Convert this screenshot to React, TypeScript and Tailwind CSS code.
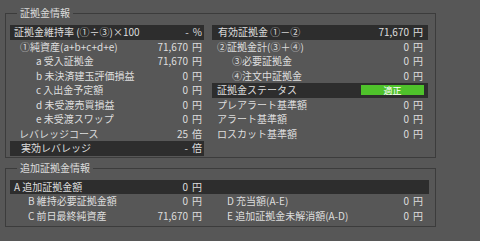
import React from "react";

type Row = { label: string; value?: string; pl: string; dark?: boolean; status?: boolean };

const left: Row[] = [
  { label: "証拠金維持率 (①÷③)×100", value: "- %", pl: "pl-[4px]", dark: true },
  { label: "①純資産(a+b+c+d+e)", value: "71,670 円", pl: "pl-[10px]" },
  { label: "a 受入証拠金", value: "71,670 円", pl: "pl-[26px]" },
  { label: "b 未決済建玉評価損益", value: "0 円", pl: "pl-[26px]" },
  { label: "c 入出金予定額", value: "0 円", pl: "pl-[26px]" },
  { label: "d 未受渡売買損益", value: "0 円", pl: "pl-[26px]" },
  { label: "e 未受渡スワップ", value: "0 円", pl: "pl-[26px]" },
  { label: "レバレッジコース", value: "25 倍", pl: "pl-[9px]" },
  { label: "実効レバレッジ", value: "- 倍", pl: "pl-[11px]", dark: true },
];

const right: Row[] = [
  { label: "有効証拠金 ①－②", value: "71,670 円", pl: "pl-[6px]", dark: true },
  { label: "②証拠金計(③＋④)", value: "0 円", pl: "pl-[5px]" },
  { label: "③必要証拠金", value: "0 円", pl: "pl-[20px]" },
  { label: "④注文中証拠金", value: "0 円", pl: "pl-[20px]" },
  { label: "証拠金ステータス", pl: "pl-[5px]", dark: true, status: true },
  { label: "プレアラート基準額", value: "0 円", pl: "pl-[5px]" },
  { label: "アラート基準額", value: "0 円", pl: "pl-[5px]" },
  { label: "ロスカット基準額", value: "0 円", pl: "pl-[5px]" },
];

function Val({ v }: { v?: string }) {
  if (!v) return null;
  const [n, u] = v.split(" ");
  return (
    <span className="whitespace-nowrap flex items-center">
      <span>{n}</span>
      <span className="ml-[4px]">{u}</span>
    </span>
  );
}

function RowView({ r, vr }: { r: Row; vr: string }) {
  return (
    <div
      className={`h-[14.5px] flex items-center justify-between ${r.pl} ${vr} ${
        r.dark ? "bg-[#2d2d2d]" : ""
      }`}
    >
      <span className="whitespace-nowrap">{r.label}</span>
      {r.status ? (
        <span className="w-[63px] h-[10px] bg-[#4fc22b] text-white flex items-center justify-center text-[9px] leading-none">
          適正
        </span>
      ) : (
        <Val v={r.value} />
      )}
    </div>
  );
}

function Frame({
  title,
  children,
  className,
}: {
  title: string;
  children: React.ReactNode;
  className: string;
}) {
  return (
    <div className={`relative border border-[#3c3c3c] ${className}`}>
      <span className="absolute left-[11px] -top-[7px] px-[3px] bg-[#575757] leading-[12px] text-[#dcdcdc]">
        {title}
      </span>
      {children}
    </div>
  );
}

export default function App() {
  return (
    <div
      className="w-[480px] h-[241px] bg-[#575757] pt-[13px] px-[5px] text-[10px] leading-[12px] text-[#dedede] overflow-hidden"
      style={{ fontFamily: '"Noto Sans CJK JP", "Noto Sans", sans-serif' }}
    >
      <Frame title="証拠金情報" className="w-[431px] h-[145px] pt-[11px] pl-[4px] pr-[6px]">
        <div className="flex gap-[8px]">
          <div className="w-[194px] flex flex-col">
            {left.map((r, i) => (
              <RowView key={i} r={r} vr="pr-[2px]" />
            ))}
          </div>
          <div className="w-[216px] flex flex-col">
            {right.map((r, i) => (
              <RowView key={i} r={r} vr={r.status ? "pr-[4px]" : "pr-[5px]"} />
            ))}
          </div>
        </div>
      </Frame>
      <Frame title="追加証拠金情報" className="mt-[10px] w-[431px] h-[59px] pt-[11px] pl-[4px] pr-[6px]">
        <div className="flex flex-col">
          <div className="h-[14px] bg-[#2d2d2d] grid grid-cols-[194px_216px] gap-x-[8px] items-center">
            <div className="flex justify-between pl-[4px] pr-[2px]">
              <span>A 追加証拠金額</span>
              <Val v="0 円" />
            </div>
            <div />
          </div>
          <div className="h-[14.5px] grid grid-cols-[194px_216px] gap-x-[8px] items-center">
            <div className="flex justify-between pl-[18px] pr-[2px]">
              <span>B 維持必要証拠金額</span>
              <Val v="0 円" />
            </div>
            <div className="flex justify-between pl-[15px] pr-[5px]">
              <span>D 充当額(A-E)</span>
              <Val v="0 円" />
            </div>
          </div>
          <div className="h-[14.5px] grid grid-cols-[194px_216px] gap-x-[8px] items-center">
            <div className="flex justify-between pl-[18px] pr-[2px]">
              <span>C 前日最終純資産</span>
              <Val v="71,670 円" />
            </div>
            <div className="flex justify-between pl-[15px] pr-[5px]">
              <span>E 追加証拠金未解消額(A-D)</span>
              <Val v="0 円" />
            </div>
          </div>
        </div>
      </Frame>
    </div>
  );
}
